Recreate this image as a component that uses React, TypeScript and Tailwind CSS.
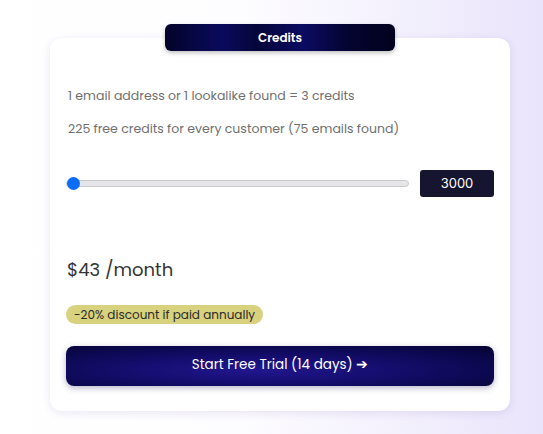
import React from "react";

export default function App() {
  return (
    <div
      className="w-[543px] h-[434px] overflow-hidden bg-[linear-gradient(90deg,#ffffff_0%,#fdfcff_45%,#f3f0fd_75%,#e9e4fb_100%)] pt-[38px] pl-[50px]"
      style={{ fontFamily: "Poppins, 'Open Sans', 'Noto Sans', sans-serif" }}
    >
      <div className="relative w-[460px] h-[373px] bg-white rounded-[12px] shadow-[0_2px_10px_rgba(80,60,160,0.12)] px-4 pt-[48px]">
        <div className="absolute left-[115px] top-[-14px] w-[230px] h-[27px] rounded-[6px] flex items-center justify-center bg-[linear-gradient(90deg,#03032a_0%,#0a0a5e_25%,#05053a_40%,#0b0b62_60%,#040430_80%,#02021e_100%)] shadow-[0_2px_4px_rgba(0,0,0,0.25)]">
          <span className="text-white text-[12px] font-semibold">Credits</span>
        </div>
        <p className="text-[12.5px] leading-[20px] text-[#6f6f6f] pl-[2px]">
          1 email address or 1 lookalike found = 3 credits
        </p>
        <p className="mt-[13px] text-[12.5px] leading-[20px] text-[#6f6f6f] pl-[2px]">
          225 free credits for every customer (75 emails found)
        </p>
        <div className="mt-[31px] flex items-center justify-between">
          <div className="relative w-[343px] h-[7px] rounded-full bg-[#e6e6e8] border border-[#c9c9cd]">
            <div className="absolute left-[0px] top-[-4px] w-[13px] h-[13px] rounded-full bg-[#0b6cf7]" />
          </div>
          <div className="w-[74px] h-[27px] rounded-[3px] bg-[#15152f] flex items-center justify-center text-white text-[13px]" style={{ fontFamily: "Inter, 'Liberation Sans', sans-serif" }}>
            3000
          </div>
        </div>
        <div className="mt-[59px] text-[18px] leading-[28px] text-[#333333] pl-[1px]">
          $43 /month
        </div>
        <div className="mt-[21px] inline-flex h-[19px] items-center rounded-full bg-[#d8d27e] px-[8px] text-[12px] text-[#2a2a2a]">
          -20% discount if paid annually
        </div>
        <div className="mt-[20px] h-[40px] rounded-[8px] flex items-center justify-center text-white text-[13.5px] bg-[radial-gradient(ellipse_at_45%_60%,#22168f_0%,#160e72_35%,#0c0850_70%,#050330_100%)] shadow-[0_2px_6px_rgba(20,10,80,0.3)]">
          Start Free Trial (14 days) ➔
        </div>
      </div>
    </div>
  );
}
